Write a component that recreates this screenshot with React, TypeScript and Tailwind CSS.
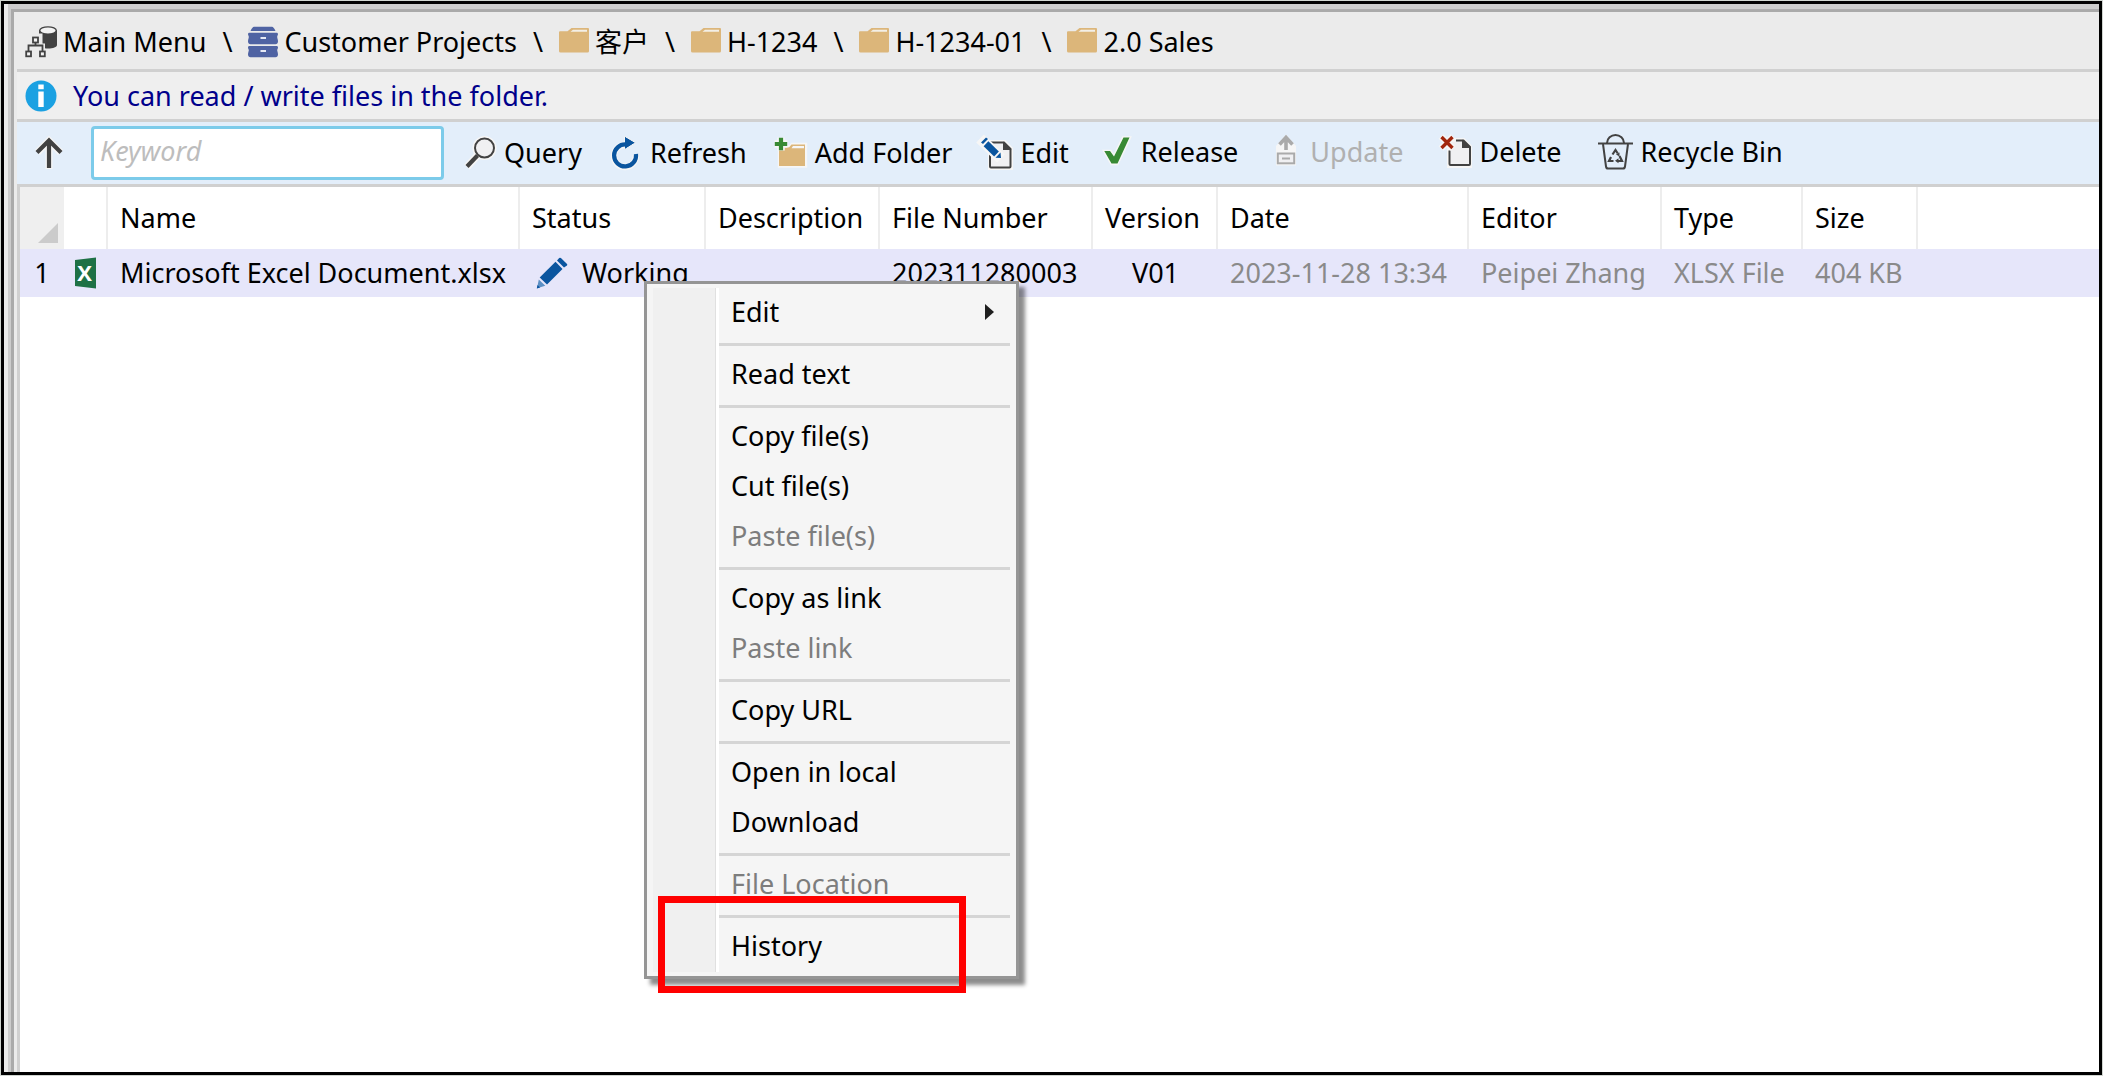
import type { ReactNode } from "react";

const HALO = "#f6f6f6";
const INK = "#424242";
const BLUE = "#0a559f";

/* ---------- icons ---------- */

function DatabaseTreeIcon() {
  return (
    <svg className="h-8 w-8 shrink-0" viewBox="0 0 32 32" aria-hidden="true">
      <path d="M14 4v15c0 2 4 3.500 9 3.500s9-1.500 9-3.500V4z" fill={INK} />
      <ellipse cx="23" cy="4.500" rx="8.300" ry="3.600" fill="#f3f3f3" stroke={INK} strokeWidth="1.400" />
      <path d="M10 10h5v8h-2M10 17v3M3.500 26v-6h14v6" fill="none" stroke="#ebebeb" strokeWidth="5" />
      <path d="M10.500 16v4M3.500 25v-5.500h14V25" fill="none" stroke={INK} strokeWidth="1.800" />
      <g fill="#f3f3f3" stroke={INK} strokeWidth="1.800">
        <rect x="8" y="11.500" width="5" height="5" />
        <rect x="1.200" y="25.500" width="4.800" height="4.800" />
        <rect x="15" y="25.500" width="4.800" height="4.800" />
      </g>
    </svg>
  );
}

function CabinetIcon() {
  return (
    <svg className="h-8 w-[30px] shrink-0" viewBox="0 0 30 32" aria-hidden="true">
      <g fill="#4f63a3">
        <path d="M6 .8h18c1 0 2.500 2 3.500 4.200h-25C3.500 2.800 5 .8 6 .8z" />
        <path d="M1.500 6.700h27c.9 0 1.500.6 1.500 1.400 0 1-.8 1.800-.8 2.900s.8 2.500.8 4.500c0 1.600-1 2.700-2.500 2.700h-25C1 18.200 0 17.100 0 15.500c0-2 .8-3.400.8-4.500S0 9.100 0 8.100c0-.8.600-1.400 1.500-1.400z" />
        <path d="M1.500 20h27c.9 0 1.500.6 1.500 1.400 0 1-.8 1.800-.8 2.900s.8 2.300.8 4.200c0 1.600-1 2.700-2.500 2.700h-25C1 31.200 0 30.100 0 28.500c0-1.900.8-3.100.8-4.200S0 22.400 0 21.400c0-.8.600-1.400 1.500-1.400z" />
      </g>
      <path d="M12.500 12h5.500M12.500 25h5.500" stroke="#e6e9f5" strokeWidth="2.200" />
    </svg>
  );
}

function FolderIcon() {
  return (
    <svg className="h-8 w-[30px] shrink-0" viewBox="0 0 30 32" aria-hidden="true">
      <path
        d="M1 5.300h7.500l4-3.300h16.500q1 0 1 1V25q0 1.500-1.500 1.500h-27Q0 26.500 0 25V6.300q0-1 1-1z"
        fill="#dcb67a"
      />
      <path d="M14 3.700h14v2.100H11.500z" fill="#f3efe7" />
    </svg>
  );
}

function InfoIcon() {
  return (
    <svg className="h-8 w-8 shrink-0" viewBox="0 0 32 32" aria-hidden="true">
      <circle cx="16" cy="16" r="15.500" fill="#1ba1e2" />
      <path d="M13.300 4.600h5.400v4.600h-5.400zM13.300 11.600h5.400V27h-5.400z" fill="#fff" />
    </svg>
  );
}

function ToolIcon({ children }: { children: ReactNode }) {
  return (
    <svg className="h-8 w-8 shrink-0 overflow-visible" viewBox="0 0 32 32" aria-hidden="true">
      {children}
    </svg>
  );
}

function UpIcon() {
  return (
    <ToolIcon>
      <path d="M16 32V4M4.500 15.500 16 3.500l11.500 12" fill="none" stroke={HALO} strokeWidth="7" />
      <path d="M16 31V4M4 15.500 16 3.500l12 12" fill="none" stroke={INK} strokeWidth="4.200" />
    </ToolIcon>
  );
}

function QueryIcon() {
  return (
    <ToolIcon>
      <path d="M13 19 3 30" stroke={HALO} strokeWidth="7.500" />
      <circle cx="20.500" cy="11" r="10" fill="#f0f0f2" stroke={HALO} strokeWidth="4" />
      <path d="M13.500 18.500 3 29.500" stroke={INK} strokeWidth="4.200" />
      <circle cx="20.500" cy="11" r="9.500" fill="#f0f0f2" stroke={INK} strokeWidth="2" />
    </ToolIcon>
  );
}

function RefreshIcon() {
  return (
    <ToolIcon>
      <path d="M16 8A11 11 0 1 0 25.800 17.500" fill="none" stroke={HALO} strokeWidth="6.500" />
      <path d="M14.500-.8 25.500 5.700 14.500 12.500z" fill={BLUE} stroke={HALO} />
      <path d="M16 7.500A11 11 0 1 0 26 17" fill="none" stroke={BLUE} strokeWidth="4.200" />
      <path d="M15 .2 24 5.700 15 11.500z" fill={BLUE} />
    </ToolIcon>
  );
}

function AddFolderIcon() {
  return (
    <ToolIcon>
      <path d="M4 9.500h11l2-2.500h14v22.500H4z" fill="#dcb67a" stroke={HALO} strokeWidth="2.400" />
      <path d="M4 10.500h10l2.500-3h13.500V29H4z" fill="#dcb67a" />
      <path d="M18 9h11v2.200H16.500z" fill={HALO} />
      <path d="M6 .5v13M-.5 7h13" stroke={HALO} strokeWidth="7.500" />
      <path d="M6 .8v12.400M-.2 7h12.400" stroke="#388a34" strokeWidth="4.200" />
    </ToolIcon>
  );
}

function EditIcon() {
  return (
    <ToolIcon>
      <path d="M10 5h14.500l6.500 6.500V31H10z" fill="#f0f0f2" stroke={HALO} strokeWidth="4" />
      <path
        d="M10 5.500h14l6.500 6.500v17.500q0 1-1 1h-18.500q-1 0-1-1z"
        fill="#f0f0f2"
        stroke={INK}
        strokeWidth="2"
      />
      <path d="M23 4.500v8.500h8.500z" fill={INK} />
      <path d="M0 1.500 21 21.500" stroke={HALO} strokeWidth="11" />
      <path d="M6 6.800 16.500 17" stroke={BLUE} strokeWidth="6.800" />
      <path d="m1 5.500 5-5 2 1.500-5 5z" fill={BLUE} />
      <path d="m20.500 15.500.5 5.500-5.500-.3z" fill={BLUE} />
    </ToolIcon>
  );
}

function ReleaseIcon() {
  return (
    <ToolIcon>
      <path
        d="M3 15h6.500l3.500 5L22 1.500h7L16.500 28h-6z"
        fill="#388a34"
        stroke={HALO}
        strokeWidth="2.400"
      />
      <path d="M3.300 15h5.700l4 5.500L22.500 1.500h6L16.500 27.500h-6z" fill="#388a34" />
    </ToolIcon>
  );
}

function UpdateIcon() {
  return (
    <ToolIcon>
      <path d="M16-1.500 26 10v19.500H6V10z" fill={HALO} />
      <path d="M16 14V3M9.500 8.500 16 1.500l6.500 7" fill="none" stroke="#aaaaaa" strokeWidth="3.600" />
      <rect x="7.800" y="17.500" width="16.400" height="9.800" fill="#f0f0f2" stroke="#aaaaaa" strokeWidth="2" />
      <path d="M12 22.500h8" stroke="#aaaaaa" strokeWidth="2" />
    </ToolIcon>
  );
}

function DeleteIcon() {
  return (
    <ToolIcon>
      <path d="M10 4h14.500l6.500 6.500V30H10z" fill="#f0f0f2" stroke={HALO} strokeWidth="4" />
      <path
        d="M17 4.500h7.500l6.500 6.500v17q0 1-1 1H11.500q-1 0-1-1V14.500"
        fill="#f0f0f2"
        stroke={INK}
        strokeWidth="2"
      />
      <path d="M23 3.500v8.500h9z" fill={INK} />
      <path d="M2 .5 14 12.500M14 .5 2 12.500" stroke={HALO} strokeWidth="6.500" />
      <path d="m2.500 1 11 11M13.500 1 2.500 12" stroke="#a1260d" strokeWidth="3.400" />
    </ToolIcon>
  );
}

function RecycleBinIcon() {
  return (
    <svg className="h-9 w-[35px] shrink-0" viewBox="0 0 35 36" aria-hidden="true">
      <g fill="none" stroke={INK} strokeWidth="2">
        <path d="M9 9c0-4.500 4-8 8.500-8S26 4.500 26 9" />
        <path d="M0 9.500h35" />
        <path d="m5 10 3 22.500q.3 2 2 2h15q1.700 0 2-2L30 10" />
        <path d="m14.500 20.500 3-4.500 2.300 3.500M21.500 22l2.500 5h-4.500M15.500 27H11l2-4" strokeWidth="2.200" />
      </g>
      <path d="m18 20.500 3.500-2v4zM20.500 24.300v5l-3.500-2.500z" fill={INK} />
    </svg>
  );
}

function ExcelIcon() {
  return (
    <svg className="h-8 w-[21px] shrink-0" viewBox="0 0 21 32" role="img" aria-label="Excel">
      <path d="M0 3 21 .5v31L0 29z" fill="#1e7145" />
      <text
        x="9.500"
        y="24"
        textAnchor="middle"
        fill="#fff"
        className="font-['Open_Sans',sans-serif] text-[22px] font-bold"
      >
        X
      </text>
    </svg>
  );
}

function PencilIcon() {
  return (
    <svg className="h-8 w-8 shrink-0" viewBox="0 0 32 32" aria-hidden="true">
      <path d="m19.500 4.800 7 7.200L11 27.500l-7.300-7z" fill={BLUE} />
      <path d="M21 3.400 23.200 1q.8-.7 1.700 0L31 7q.6.800 0 1.600l-3 2z" fill={BLUE} />
      <path d="m2.800 22.500 6.500 6.300L1 31.300z" fill="#5b8fc4" />
      <path d="m1.500 28 2.700 2.500L.8 31.500z" fill={BLUE} />
    </svg>
  );
}

/* ---------- data ---------- */

const crumbs: { label: string; icon: ReactNode }[] = [
  { label: "Main Menu", icon: <DatabaseTreeIcon /> },
  { label: "Customer Projects", icon: <CabinetIcon /> },
  { label: "客户", icon: <FolderIcon /> },
  { label: "H-1234", icon: <FolderIcon /> },
  { label: "H-1234-01", icon: <FolderIcon /> },
  { label: "2.0 Sales", icon: <FolderIcon /> },
];

const menuGroups: { label: string; disabled?: boolean; submenu?: boolean }[][] = [
  [{ label: "Edit", submenu: true }],
  [{ label: "Read text" }],
  [{ label: "Copy file(s)" }, { label: "Cut file(s)" }, { label: "Paste file(s)", disabled: true }],
  [{ label: "Copy as link" }, { label: "Paste link", disabled: true }],
  [{ label: "Copy URL" }],
  [{ label: "Open in local" }, { label: "Download" }],
  [{ label: "File Location", disabled: true }],
  [{ label: "History" }],
];

const headings = ["Name", "Status", "Description", "File Number", "Version", "Date", "Editor", "Type", "Size"];

/* ---------- parts ---------- */

function Breadcrumb() {
  return (
    <nav aria-label="Breadcrumb" className="flex h-[60px] items-center border-b-3 border-[#d0d0d0] bg-[#ebebeb] pl-2">
      <ol className="flex items-center gap-4 pt-0.5">
        {crumbs.map((c, i) => (
          <li key={c.label} className="flex items-center gap-4">
            {i > 0 && (
              <span aria-hidden="true" className="w-[10px]">
                \
              </span>
            )}
            <a href="#" className="flex items-center gap-1.5 whitespace-nowrap">
              {c.icon}
              {c.label}
            </a>
          </li>
        ))}
      </ol>
    </nav>
  );
}

function ToolButton({ icon, label, disabled }: { icon: ReactNode; label: string; disabled?: boolean }) {
  return (
    <button
      type="button"
      disabled={disabled}
      className="flex items-center gap-2 whitespace-nowrap disabled:text-[#b0b0b0]"
    >
      {icon}
      {label}
    </button>
  );
}

function Toolbar() {
  return (
    <div role="toolbar" className="flex h-[65px] items-center border-b-3 border-[#d0d0d0] bg-[#e3eefa] pl-4">
      <button type="button" aria-label="Up one level">
        <UpIcon />
      </button>
      <input
        type="text"
        aria-label="Keyword"
        placeholder="Keyword"
        className="ml-[26px] h-[54px] w-[353px] rounded border-3 border-[#7ccbea] bg-white px-1.5 pb-1.5 outline-none placeholder:text-[#bdbdbd] placeholder:italic"
      />
      <div className="ml-5 flex items-center gap-7">
        <ToolButton icon={<QueryIcon />} label="Query" />
        <ToolButton icon={<RefreshIcon />} label="Refresh" />
        <ToolButton icon={<AddFolderIcon />} label="Add Folder" />
        <ToolButton icon={<EditIcon />} label="Edit" />
      </div>
      <div className="ml-8 flex items-center gap-8 pb-0.5">
        <ToolButton icon={<ReleaseIcon />} label="Release" />
        <ToolButton icon={<UpdateIcon />} label="Update" disabled />
      </div>
      <div className="ml-9 flex items-center gap-9 pb-0.5">
        <ToolButton icon={<DeleteIcon />} label="Delete" />
        <ToolButton icon={<RecycleBinIcon />} label="Recycle Bin" />
      </div>
    </div>
  );
}

function FileTable() {
  return (
    <table className="w-full table-fixed border-separate border-spacing-0 text-left whitespace-nowrap">
      <colgroup>
        <col className="w-[44px]" />
        <col className="w-[44px]" />
        <col className="w-[412px]" />
        <col className="w-[186px]" />
        <col className="w-[174px]" />
        <col className="w-[213px]" />
        <col className="w-[125px]" />
        <col className="w-[251px]" />
        <col className="w-[193px]" />
        <col className="w-[141px]" />
        <col className="w-[115px]" />
        <col />
      </colgroup>
      <thead>
        <tr className="h-[62px]">
          <th className="bg-[#efefef] p-0 align-bottom">
            <button type="button" aria-label="Select all" className="mb-1.5 ml-[18px] block">
              <svg className="h-5 w-5" viewBox="0 0 20 20" aria-hidden="true">
                <path d="M0 20 20 0v20z" fill="#cbcbcb" />
              </svg>
            </button>
          </th>
          <th aria-label="File icon" className="border-r-2 border-[#ededed] p-0" />
          {headings.map((h) => (
            <th key={h} className="border-r-2 border-[#ededed] py-0 pr-0 pl-3 font-normal">
              {h}
            </th>
          ))}
          <th className="p-0" />
        </tr>
      </thead>
      <tbody>
        <tr className="h-[48px] bg-[#e6e6fa]">
          <td className="p-0 text-center">1</td>
          <td className="py-0 pr-0 pl-[11px]">
            <ExcelIcon />
          </td>
          <td className="py-0 pr-0 pl-3">Microsoft Excel Document.xlsx</td>
          <td className="py-0 pr-0 pl-4">
            <span className="flex items-center gap-3.5">
              <PencilIcon />
              Working
            </span>
          </td>
          <td className="p-0" />
          <td className="py-0 pr-0 pl-3">202311280003</td>
          <td className="p-0 text-center">V01</td>
          <td className="py-0 pr-0 pl-3 text-[#8a8a8a]">2023-11-28 13:34</td>
          <td className="py-0 pr-0 pl-3 text-[#8a8a8a]">Peipei Zhang</td>
          <td className="py-0 pr-0 pl-3 text-[#8a8a8a]">XLSX File</td>
          <td className="py-0 pr-0 pl-3 text-[#8a8a8a]">404 KB</td>
          <td className="p-0" />
        </tr>
      </tbody>
    </table>
  );
}

function ContextMenu() {
  return (
    <div className="absolute top-[94px] left-[624px] flex w-[375px] border-3 border-[#959595] bg-[#f5f5f5] py-1 pr-1.5 pl-1.5 shadow-[6px_6px_4px_rgba(0,0,0,0.45)]">
      <div aria-hidden="true" className="w-[63px] border-r border-[#e0e0e0] bg-[#f0f0f0]" />
      <div role="menu" className="flex-1 border-l-3 border-white">
        {menuGroups.map((group, g) => (
          <div
            key={group[0].label}
            role="group"
            className={g > 0 ? "before:mt-[5px] before:mb-1 before:block before:h-[3px] before:bg-[#d5d5d5]" : ""}
          >
            {group.map((item) => (
              <button
                key={item.label}
                type="button"
                role="menuitem"
                disabled={item.disabled}
                className="flex h-[50px] w-full items-center justify-between pr-4 pb-0.5 pl-3 disabled:text-[#7d7d7d]"
              >
                {item.label}
                {item.submenu && (
                  <svg className="h-4 w-[9px]" viewBox="0 0 9 16" aria-hidden="true">
                    <path d="M0 0v16l9-8z" fill="#1f1f1f" />
                  </svg>
                )}
              </button>
            ))}
          </div>
        ))}
      </div>
      <div
        aria-hidden="true"
        className="pointer-events-none absolute -bottom-[17px] left-[11px] h-[97px] w-[308px] border-7 border-[#ff0000]"
      />
    </div>
  );
}

export default function App() {
  return (
    <div className="flex min-h-screen bg-[#d0d5d0] p-px font-['Noto_Sans','Noto_Sans_CJK_SC',sans-serif] text-[27px] leading-9 text-black">
      <div className="flex min-w-0 flex-1 border-3 border-black bg-[#ebebeb]">
        <div className="w-1 shrink-0" />
        <div className="flex min-w-0 flex-1 border-t-5 border-l-3 border-[#cccccc]">
          <div className="flex min-w-0 flex-1 flex-col border-t-3 border-l-3 border-[#aaaaaa] pl-[3px]">
            <Breadcrumb />
            <div className="flex h-[50px] items-center gap-4 border-b-3 border-[#d0d0d0] bg-[#efefef] pl-2 text-[#00008b]">
              <InfoIcon />
              <p>You can read / write files in the folder.</p>
            </div>
            <Toolbar />
            <main className="relative flex-1 border-l-3 border-[#d0d0d0] bg-white">
              <FileTable />
              <ContextMenu />
            </main>
          </div>
        </div>
      </div>
    </div>
  );
}
